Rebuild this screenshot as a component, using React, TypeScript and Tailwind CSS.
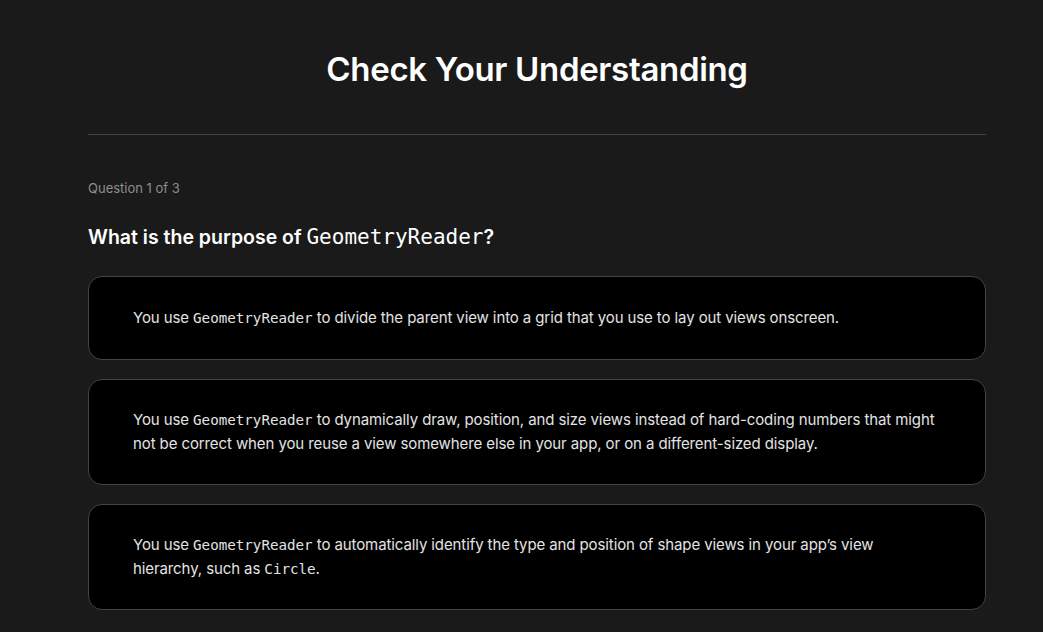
import React from "react";

const sans = "font-['Inter','Noto_Sans',sans-serif]";
const mono = "font-['DejaVu_Sans_Mono','Liberation_Mono',monospace]";

function Code({ children }: { children: React.ReactNode }) {
  return <code className={`${mono} text-[14.2px] tracking-normal`}>{children}</code>;
}

const answers: React.ReactNode[] = [
  <>
    You use <Code>GeometryReader</Code> to divide the parent view into a grid that you use to lay out views onscreen.
  </>,
  <>
    You use <Code>GeometryReader</Code> to dynamically draw, position, and size views instead of hard-coding numbers that might
    not be correct when you reuse a view somewhere else in your app, or on a different-sized display.
  </>,
  <>
    You use <Code>GeometryReader</Code> to automatically identify the type and position of shape views in your app’s view
    hierarchy, such as <Code>Circle</Code>.
  </>,
];

export default function App() {
  return (
    <div className={`h-screen overflow-hidden bg-[#1a1a1a] ${sans} text-white`}>
      <div className="ml-[88px] w-[898px] pt-[46px]">
        <h1 className="text-center text-[33px] font-semibold leading-[46px] tracking-[-0.01em]">Check Your Understanding</h1>
        <div className="mt-[42px] h-px bg-[#424242]" />

        <p className="mt-[44px] text-[13px] text-[#8e8e8e]">Question 1 of 3</p>
        <h2 className="mt-[24px] text-[19.5px] font-semibold leading-[28px]">
          What is the purpose of <code className={`${mono} text-[21px] font-normal`}>GeometryReader</code>?
        </h2>

        <div className="mt-[25px] flex flex-col gap-[19px]">
          {answers.map((a, i) => (
            <div
              key={i}
              className="flex min-h-[84px] items-center rounded-[14px] border border-[#434343] bg-black px-[44px] py-[28px]"
            >
              <p className="text-[15px] leading-[24px] tracking-[-0.1px] text-[#e3e3e3]">{a}</p>
            </div>
          ))}
        </div>
      </div>
    </div>
  );
}
